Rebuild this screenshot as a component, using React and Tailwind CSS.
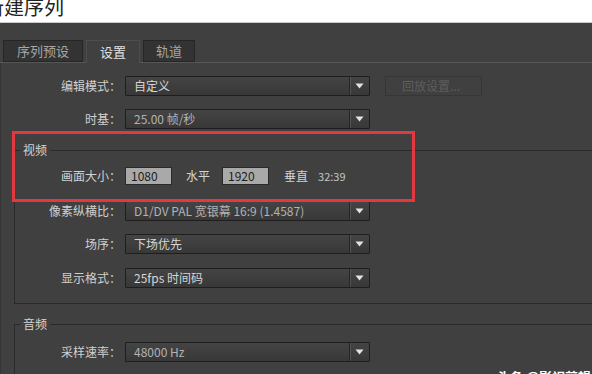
import React from "react";

const font = { fontFamily: '"Noto Sans CJK SC", "Noto Sans", sans-serif' };

const Arrow = () => (
  <svg width="9" height="6" viewBox="0 0 9 6">
    <path d="M0.5 0.5 H8.5 L4.5 5.5 Z" fill="#e4e4e4" />
  </svg>
);

const Select = ({ value, dim }) => (
  <div className="flex h-[20px] w-[245px] rounded-[1px] border border-[#1e1e1e] bg-linear-to-b from-[#444444] to-[#383838]">
    <div
      className={`flex-1 truncate pl-[8px] text-[12px] leading-[18px] ${
        dim ? "text-[#b2b2b2]" : "text-[#d6d6d6]"
      }`}
    >
      {value}
    </div>
    <div className="flex w-[20px] items-center justify-center border-l border-[#262626] shadow-[inset_1px_0_0_#525252]">
      <Arrow />
    </div>
  </div>
);

const Row = ({ label, labelW = "w-[120px]", children }) => (
  <div className="flex h-[20px] items-center">
    <div className={`${labelW} shrink-0 text-right text-[12px] leading-[20px] text-[#d0d0d0]`}>
      {label}
    </div>
    <div className="ml-[4px] flex items-center">{children}</div>
  </div>
);

const NumBox = ({ value }) => (
  <div className="h-[18px] w-[47px] border border-[#2a2a2a] bg-[#a9a9a9] pl-[5px] text-[12px] leading-[16px] text-[#1c1c1c]">
    {value}
  </div>
);

const Tab = ({ children, active, w }) => (
  <div
    className={`${w} flex h-[22px] items-center justify-center text-[13px] ${
      active
        ? "-mb-px h-[23px] border-x border-t border-[#4e4e4e] bg-[#404040] text-[#e2e2e2]"
        : "border border-[#262626] bg-[#333333] text-[#a6a6a6]"
    }`}
  >
    {children}
  </div>
);

export default function App() {
  return (
    <div className="relative h-[374px] w-[592px] overflow-hidden bg-white" style={font}>
      {/* title bar */}
      <div className="h-[23px] overflow-hidden border-b border-[#cbcbcb] bg-white">
        <div className="-ml-[16px] -mt-[3px] text-[20px] leading-[20px] text-[#222222]">新建序列</div>
      </div>

      <div className="h-[351px] bg-[#404040]">
        {/* tabs */}
        <div className="flex h-[40px] items-end gap-[3px] border-b border-[#575757] pl-[3px]">
          <Tab w="w-[80px]">序列预设</Tab>
          <Tab w="w-[54px]" active>
            设置
          </Tab>
          <Tab w="w-[52px]">轨道</Tab>
        </div>

        {/* settings panel */}
        <div className="border-l border-[#363636] pt-[13px]">
          <div className="flex items-center">
            <Row label="编辑模式：">
              <Select value="自定义" />
            </Row>
            <div className="ml-[15px] flex h-[20px] w-[97px] items-center border border-[#363636] pl-[16px] text-[12px] text-[#5e5e5e]">
              回放设置...
            </div>
          </div>

          <div className="mt-[13px]">
            <Row label="时基：">
              <Select value="25.00 帧/秒" dim />
            </Row>
          </div>

          {/* video group */}
          <fieldset className="ml-[13px] mt-[14px] border-y border-l border-[#2a2a2a] pb-[15px]">
            <legend className="ml-[5px] px-[3px] text-[12px] leading-[14px] text-[#d4d4d4]">视频</legend>
            <div className="mt-[9px]">
              <Row label="画面大小：" labelW="w-[106px]">
                <NumBox value="1080" />
                <span className="ml-[14px] text-[12px] text-[#d4d4d4]">水平</span>
                <div className="ml-[12px]">
                  <NumBox value="1920" />
                </div>
                <span className="ml-[15px] text-[12px] text-[#d4d4d4]">垂直</span>
                <span className="ml-[10px] text-[11px] text-[#c4c4c4]">32:39</span>
              </Row>
            </div>
            <div className="mt-[15px]">
              <Row label="像素纵横比：" labelW="w-[106px]">
                <Select value="D1/DV PAL 宽银幕 16:9 (1.4587)" dim />
              </Row>
            </div>
            <div className="mt-[13px]">
              <Row label="场序：" labelW="w-[106px]">
                <Select value="下场优先" />
              </Row>
            </div>
            <div className="mt-[14px]">
              <Row label="显示格式：" labelW="w-[106px]">
                <Select value="25fps 时间码" />
              </Row>
            </div>
          </fieldset>

          {/* audio group */}
          <fieldset className="ml-[13px] mt-[13px] border-t border-l border-[#2a2a2a] pb-[20px]">
            <legend className="ml-[5px] px-[3px] text-[12px] leading-[14px] text-[#d4d4d4]">音频</legend>
            <div className="mt-[11px]">
              <Row label="采样速率：" labelW="w-[106px]">
                <Select value="48000 Hz" dim />
              </Row>
            </div>
          </fieldset>
        </div>
      </div>

      {/* annotation box */}
      <div className="absolute left-[12px] top-[131px] h-[71px] w-[403px] border-[3px] border-[#e2383f]" />

      {/* watermark */}
      <div className="absolute left-[497px] top-[367px] text-[13px] font-bold text-white">头条 @影视剪辑</div>
    </div>
  );
}
